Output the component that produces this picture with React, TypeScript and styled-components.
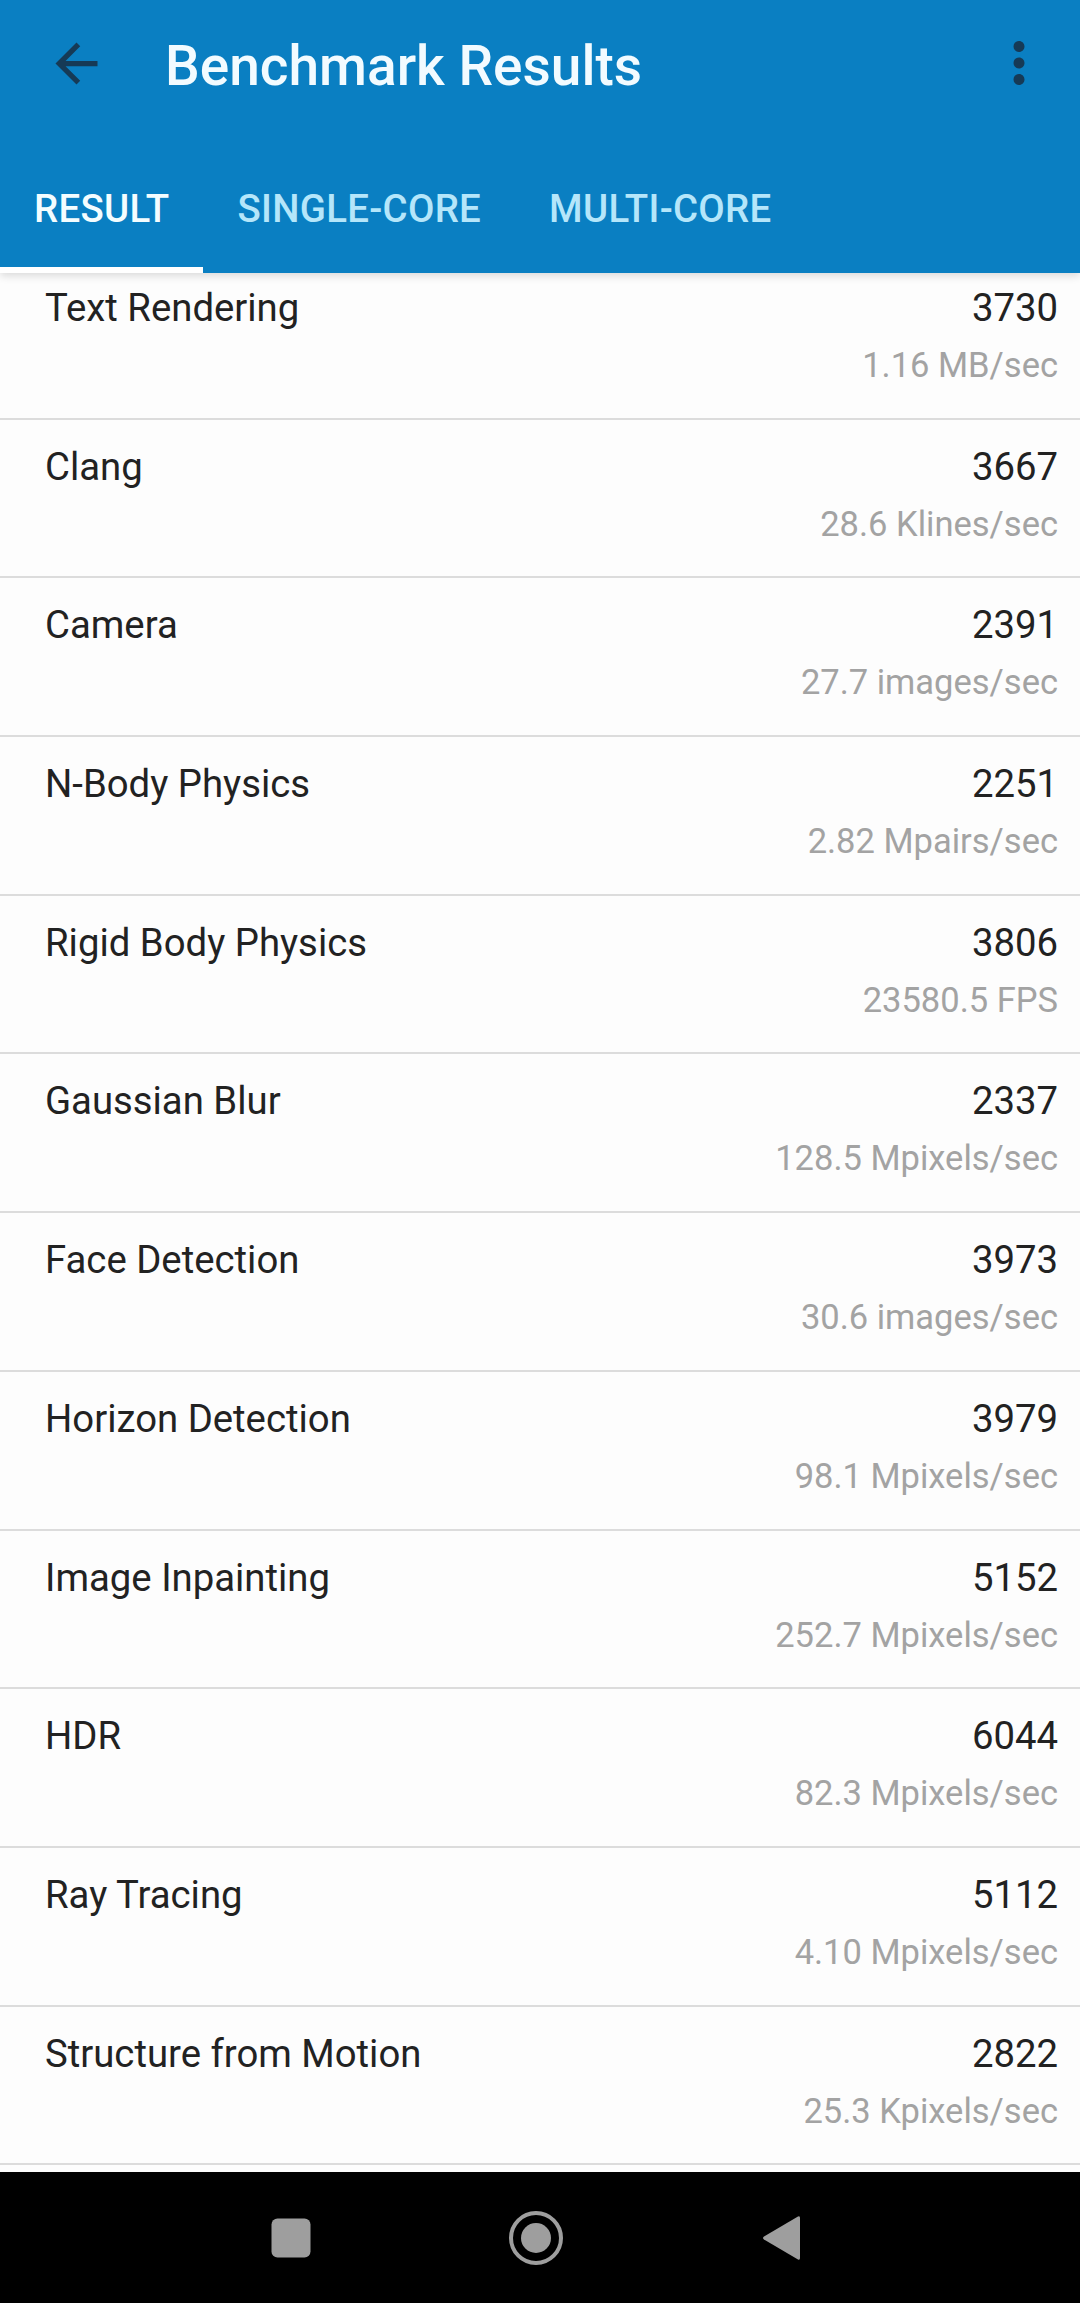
import React from 'react'
import styled, { createGlobalStyle } from 'styled-components'

const GlobalStyle = createGlobalStyle`
  html, body {
    margin: 0;
    padding: 0;
    background: #fdfdfd;
    font-family: Roboto, 'Noto Sans', 'Liberation Sans', sans-serif;
  }
`

interface ResultItem {
  name: string
  score: number
  rate: string
}

const results: ResultItem[] = [
  { name: 'Text Rendering', score: 3730, rate: '1.16 MB/sec' },
  { name: 'Clang', score: 3667, rate: '28.6 Klines/sec' },
  { name: 'Camera', score: 2391, rate: '27.7 images/sec' },
  { name: 'N-Body Physics', score: 2251, rate: '2.82 Mpairs/sec' },
  { name: 'Rigid Body Physics', score: 3806, rate: '23580.5 FPS' },
  { name: 'Gaussian Blur', score: 2337, rate: '128.5 Mpixels/sec' },
  { name: 'Face Detection', score: 3973, rate: '30.6 images/sec' },
  { name: 'Horizon Detection', score: 3979, rate: '98.1 Mpixels/sec' },
  { name: 'Image Inpainting', score: 5152, rate: '252.7 Mpixels/sec' },
  { name: 'HDR', score: 6044, rate: '82.3 Mpixels/sec' },
  { name: 'Ray Tracing', score: 5112, rate: '4.10 Mpixels/sec' },
  { name: 'Structure from Motion', score: 2822, rate: '25.3 Kpixels/sec' },
]

const tabs = ['RESULT', 'SINGLE-CORE', 'MULTI-CORE']

const Screen = styled.div`
  width: 1080px;
  height: 2303px;
  display: flex;
  flex-direction: column;
  overflow: hidden;
  background: #fdfdfd;
`

const AppBar = styled.header`
  background: #0a7fc2;
  position: relative;
  z-index: 2;
  box-shadow: 0 3px 8px rgba(0, 0, 0, 0.14);
`

const Toolbar = styled.div`
  height: 132px;
  display: flex;
  align-items: center;
  padding: 0 28px 0 45px;
`

const IconButton = styled.div`
  display: flex;
  color: #163a56;
  margin-top: -6px;
`

const Title = styled.h1`
  flex: 1;
  margin: 0 0 0 57px;
  font-size: 55px;
  font-weight: 500;
  color: #f2fbff;
  line-height: 62px;
`

const TabBar = styled.nav`
  height: 141px;
  display: flex;
`

const Tab = styled.div<{ active?: boolean }>`
  box-sizing: border-box;
  height: 141px;
  padding: 55px 34px 0;
  font-size: 38.4px;
  font-weight: 500;
  line-height: 44px;
  letter-spacing: 0.3px;
  color: ${(props) => (props.active ? '#f4fdff' : '#b5e6fa')};
  border-bottom: 6px solid ${(props) => (props.active ? '#ffffff' : 'transparent')};
`

const ListViewport = styled.main`
  flex: 1;
  overflow: hidden;
  position: relative;
  z-index: 1;
`

const List = styled.div`
  margin-top: -12px;
`

const Row = styled.div`
  box-sizing: border-box;
  height: 158.7px;
  padding: 25px 22px 0 45px;
  display: flex;
  justify-content: space-between;
  border-bottom: 2.5px solid #dcdcdc;
`

const Label = styled.span`
  font-size: 38.3px;
  line-height: 44px;
  color: #222222;
`

const Values = styled.div`
  display: flex;
  flex-direction: column;
  align-items: flex-end;
`

const Score = styled.span`
  font-size: 38.3px;
  line-height: 44px;
  color: #222222;
`

const Rate = styled.span`
  margin-top: 15px;
  font-size: 34.5px;
  line-height: 40px;
  color: #a3a3a3;
`

const NavBar = styled.footer`
  height: 131px;
  background: #000000;
  display: flex;
  justify-content: center;
  align-items: center;
  padding-right: 9px;
`

const NavSlot = styled.div`
  width: 245px;
  display: flex;
  justify-content: center;
  align-items: center;
`

function BackArrow() {
  return (
    <svg width="63" height="63" viewBox="0 0 24 24" fill="currentColor">
      <path d="M20 11H7.83l5.59-5.59L12 4l-8 8 8 8 1.41-1.41L7.83 13H20v-2z" />
    </svg>
  )
}

function MoreVert() {
  return (
    <svg width="66" height="66" viewBox="0 0 24 24" fill="currentColor">
      <path d="M12 8c1.1 0 2-.9 2-2s-.9-2-2-2-2 .9-2 2 .9 2 2 2zm0 2c-1.1 0-2 .9-2 2s.9 2 2 2 2-.9 2-2-.9-2-2-2zm0 6c-1.1 0-2 .9-2 2s.9 2 2 2 2-.9 2-2-.9-2-2-2z" />
    </svg>
  )
}

export default function App() {
  return (
    <Screen>
      <GlobalStyle />
      <AppBar>
        <Toolbar>
          <IconButton>
            <BackArrow />
          </IconButton>
          <Title>Benchmark Results</Title>
          <IconButton>
            <MoreVert />
          </IconButton>
        </Toolbar>
        <TabBar>
          {tabs.map((tab, index) => (
            <Tab key={tab} active={index === 0}>
              {tab}
            </Tab>
          ))}
        </TabBar>
      </AppBar>

      <ListViewport>
        <List>
          {results.map((item) => (
            <Row key={item.name}>
              <Label>{item.name}</Label>
              <Values>
                <Score>{item.score}</Score>
                <Rate>{item.rate}</Rate>
              </Values>
            </Row>
          ))}
        </List>
      </ListViewport>

      <NavBar>
        <NavSlot>
          <svg width="40" height="40" viewBox="0 0 40 40">
            <rect x="0.5" y="0.5" width="39" height="39" rx="6" fill="#9e9e9e" />
          </svg>
        </NavSlot>
        <NavSlot>
          <svg width="56" height="56" viewBox="0 0 56 56">
            <circle cx="28" cy="28" r="25" fill="none" stroke="#9e9e9e" strokeWidth="4" />
            <circle cx="28" cy="28" r="15" fill="#9e9e9e" />
          </svg>
        </NavSlot>
        <NavSlot>
          <svg width="40" height="48" viewBox="0 0 40 48">
            <path
              d="M37 2.5 Q39 1.5 39 4 L39 44 Q39 46.5 37 45.5 L3 25.5 Q1 24 3 22.5 Z"
              fill="#9e9e9e"
            />
          </svg>
        </NavSlot>
      </NavBar>
    </Screen>
  )
}
